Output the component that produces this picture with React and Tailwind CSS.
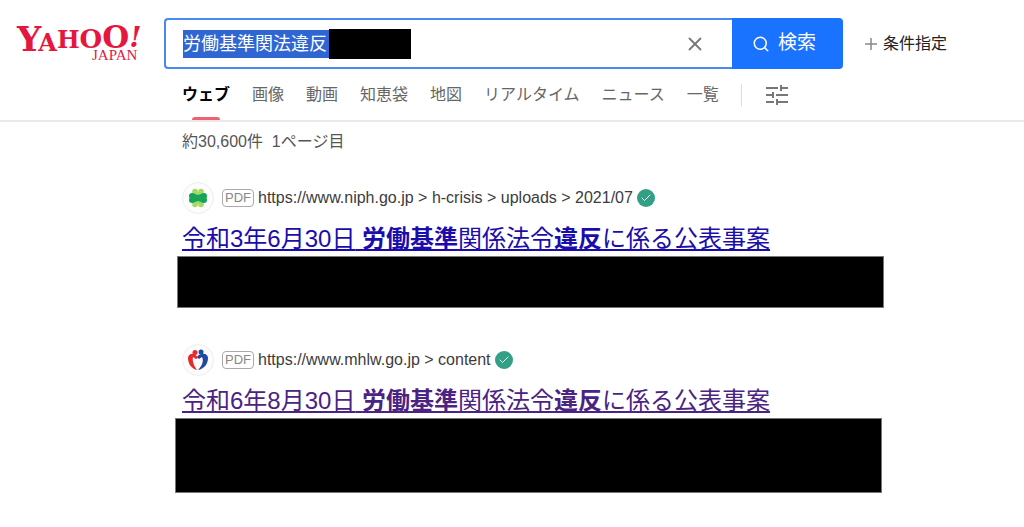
import React from 'react';
import { FiCheck, FiSearch, FiX } from 'react-icons/fi';

const tabs = ['ウェブ', '画像', '動画', '知恵袋', '地図', 'リアルタイム', 'ニュース', '一覧'];

const YahooLogo = () => (
  <svg
    width="132"
    height="50"
    viewBox="0 0 132 50"
    role="img"
    aria-label="Yahoo! JAPAN"
    className="fill-[#e5173f] font-['DejaVu_Serif',serif] font-bold"
  >
    <text x="1" y="32">
      <tspan fontSize="34">Y</tspan>
      <tspan fontSize="24" dx="-3">A</tspan>
      <tspan fontSize="24" dy="-3">H</tspan>
      <tspan fontSize="26">O</tspan>
      <tspan fontSize="31">O</tspan>
      <tspan fontSize="28" dy="-1" fontStyle="italic">!</tspan>
    </text>
    <text x="76" y="41" fontSize="15" className="font-['Liberation_Serif',serif] font-normal">JAPAN</text>
  </svg>
);

const NiphIcon = () => (
  <svg width="20" height="20" viewBox="0 0 20 20" aria-hidden="true">
    <g fill="#a5d867">
      <circle cx="7" cy="3.5" r="2.8" />
      <circle cx="13" cy="3.5" r="2.8" />
      <circle cx="7" cy="16.5" r="2.8" />
      <circle cx="13" cy="16.5" r="2.8" />
      <path d="M5 4h10l1 6-1 6H5l-1-6z" />
    </g>
    <g fill="#16a558">
      <circle cx="4" cy="8" r="3" />
      <circle cx="4" cy="12" r="3" />
      <circle cx="16" cy="8" r="3" />
      <circle cx="16" cy="12" r="3" />
      <path d="M4 5l6 2 6-2v10l-6-2-6 2z" />
    </g>
  </svg>
);

const MhlwIcon = () => (
  <svg width="22" height="22" viewBox="0 0 22 22" aria-hidden="true">
    <g fill="#e8292f">
      <circle cx="8" cy="3.5" r="2.5" />
      <path d="M1 9c0-3 3-5 6-4 2 1 3 2 4 4l-2 1-3-2c-1 4 1 9 4 13C5 20 1 15 1 9z" />
    </g>
    <g fill="#1f4a9f">
      <circle cx="14" cy="3" r="2.5" />
      <path d="M21 9c0-3-3-5-6-4-2 0-4 1-5 3l2 2 3-2c2 4 0 9-4 13 6-1 10-6 10-12z" />
    </g>
  </svg>
);

const FilterIcon = () => (
  <svg width="22" height="22" viewBox="0 0 22 22" fill="none" stroke="#777" strokeWidth="2" aria-hidden="true">
    <path d="M0 4h12M15 4h7M15 1v6M0 11h7M10 11h12M7 8v6M0 18h8M11 18h11M11 15v6" />
  </svg>
);

const results = [
  {
    icon: <NiphIcon />,
    url: 'https://www.niph.go.jp > h-crisis > uploads > 2021/07',
    date: '令和3年6月30日',
    color: 'text-[#1a0dab]',
    box: 'ml-[2px] h-[52px]',
  },
  {
    icon: <MhlwIcon />,
    url: 'https://www.mhlw.go.jp > content',
    date: '令和6年8月30日',
    color: 'text-[#4b2382]',
    box: 'mr-[2px] h-[75px]',
  },
];

const Result = ({ result }) => (
  <article className="mb-9">
    <div className="flex h-8 items-center pl-[7px]">
      <span className="flex size-8 items-center justify-center rounded-full border border-[#eee] bg-[#fcfcfc]">
        {result.icon}
      </span>
      <span className="ml-2 rounded border border-[#aaa] px-[2px] text-[13px] leading-4 text-[#888]">PDF</span>
      <cite className="ml-1 text-base not-italic whitespace-nowrap text-[#3c3c3c]">{result.url}</cite>
      <span className="ml-1 flex size-[18px] items-center justify-center rounded-full bg-[#32a085] text-white">
        <FiCheck size={12} strokeWidth={2} />
      </span>
    </div>
    <h2 className="mt-2 pl-[7px] text-2xl leading-[33px] font-normal whitespace-nowrap">
      <a href="#" className={`underline decoration-2 underline-offset-2 ${result.color}`}>
        {result.date} <b className="font-bold">労働基準</b>関係法令<b className="font-bold">違反</b>に係る公表事案
      </a>
    </h2>
    <div className={`mt-px border border-[#777] bg-black ${result.box}`} />
  </article>
);

const App = () => {
  return (
    <div className="min-h-screen bg-white font-['Liberation_Sans','Noto_Sans_CJK_JP',sans-serif]">
      <header className="border-b-2 border-[#e9e9e9]">
        <div className="flex items-center pt-[18px] pl-4">
          <a href="#" className="w-[148px] shrink-0">
            <YahooLogo />
          </a>
          <form
            role="search"
            onSubmit={(e) => e.preventDefault()}
            className="flex h-[51px] max-w-[679px] flex-1 items-stretch"
          >
            <div className="flex flex-1 items-center rounded-l border-2 border-r-0 border-[#4a8af0] pl-[17px]">
              <input
                type="text"
                aria-label="検索キーワード"
                defaultValue="労働基準関法違反"
                className="h-7 w-[146px] bg-[#2f66d2] text-lg leading-7 text-white outline-none"
              />
              <span className="h-[30px] w-[82px] bg-black" />
              <button type="button" aria-label="クリア" className="ml-auto pr-[26px] text-[#777]">
                <FiX size={22} />
              </button>
            </div>
            <button type="submit" className="flex w-[111px] items-center gap-2 rounded-r bg-[#1a73ff] pl-5 text-[19px] text-white">
              <FiSearch size={18} />
              検索
            </button>
          </form>
          <button type="button" className="ml-[22px] flex shrink-0 items-center gap-[6px] text-base text-[#222]">
            <svg width="12" height="12" viewBox="0 0 12 12" stroke="#888" strokeWidth="1.5" aria-hidden="true">
              <path d="M6 0v12M0 6h12" />
            </svg>
            条件指定
          </button>
        </div>

        {/* Search tabs */}
        <nav className="flex h-[51px] items-center gap-[22px] pl-[182px] text-base whitespace-nowrap">
          {tabs.map((tab, i) =>
            i === 0 ? (
              <a key={tab} href="#" aria-current="page" className="relative flex h-full items-center font-bold text-black">
                {tab}
                <span className="absolute inset-x-[10px] bottom-0 h-[3px] rounded-t bg-[#f0616d]" />
              </a>
            ) : (
              <a key={tab} href="#" className="text-[#666]">
                {tab}
              </a>
            )
          )}
          <div className="flex items-center gap-6 border-l border-[#ddd] pl-6">
            <button type="button" aria-label="表示設定">
              <FilterIcon />
            </button>
          </div>
        </nav>
      </header>

      <main className="pt-2 pl-[175px]">
        <p className="mb-7 pl-[7px] text-base leading-6 text-[#555]">約30,600件&nbsp; 1ページ目</p>
        <div className="w-full max-w-[709px]">
          {results.map((result) => (
            <Result key={result.url} result={result} />
          ))}
        </div>
      </main>
    </div>
  );
};

export default App;
